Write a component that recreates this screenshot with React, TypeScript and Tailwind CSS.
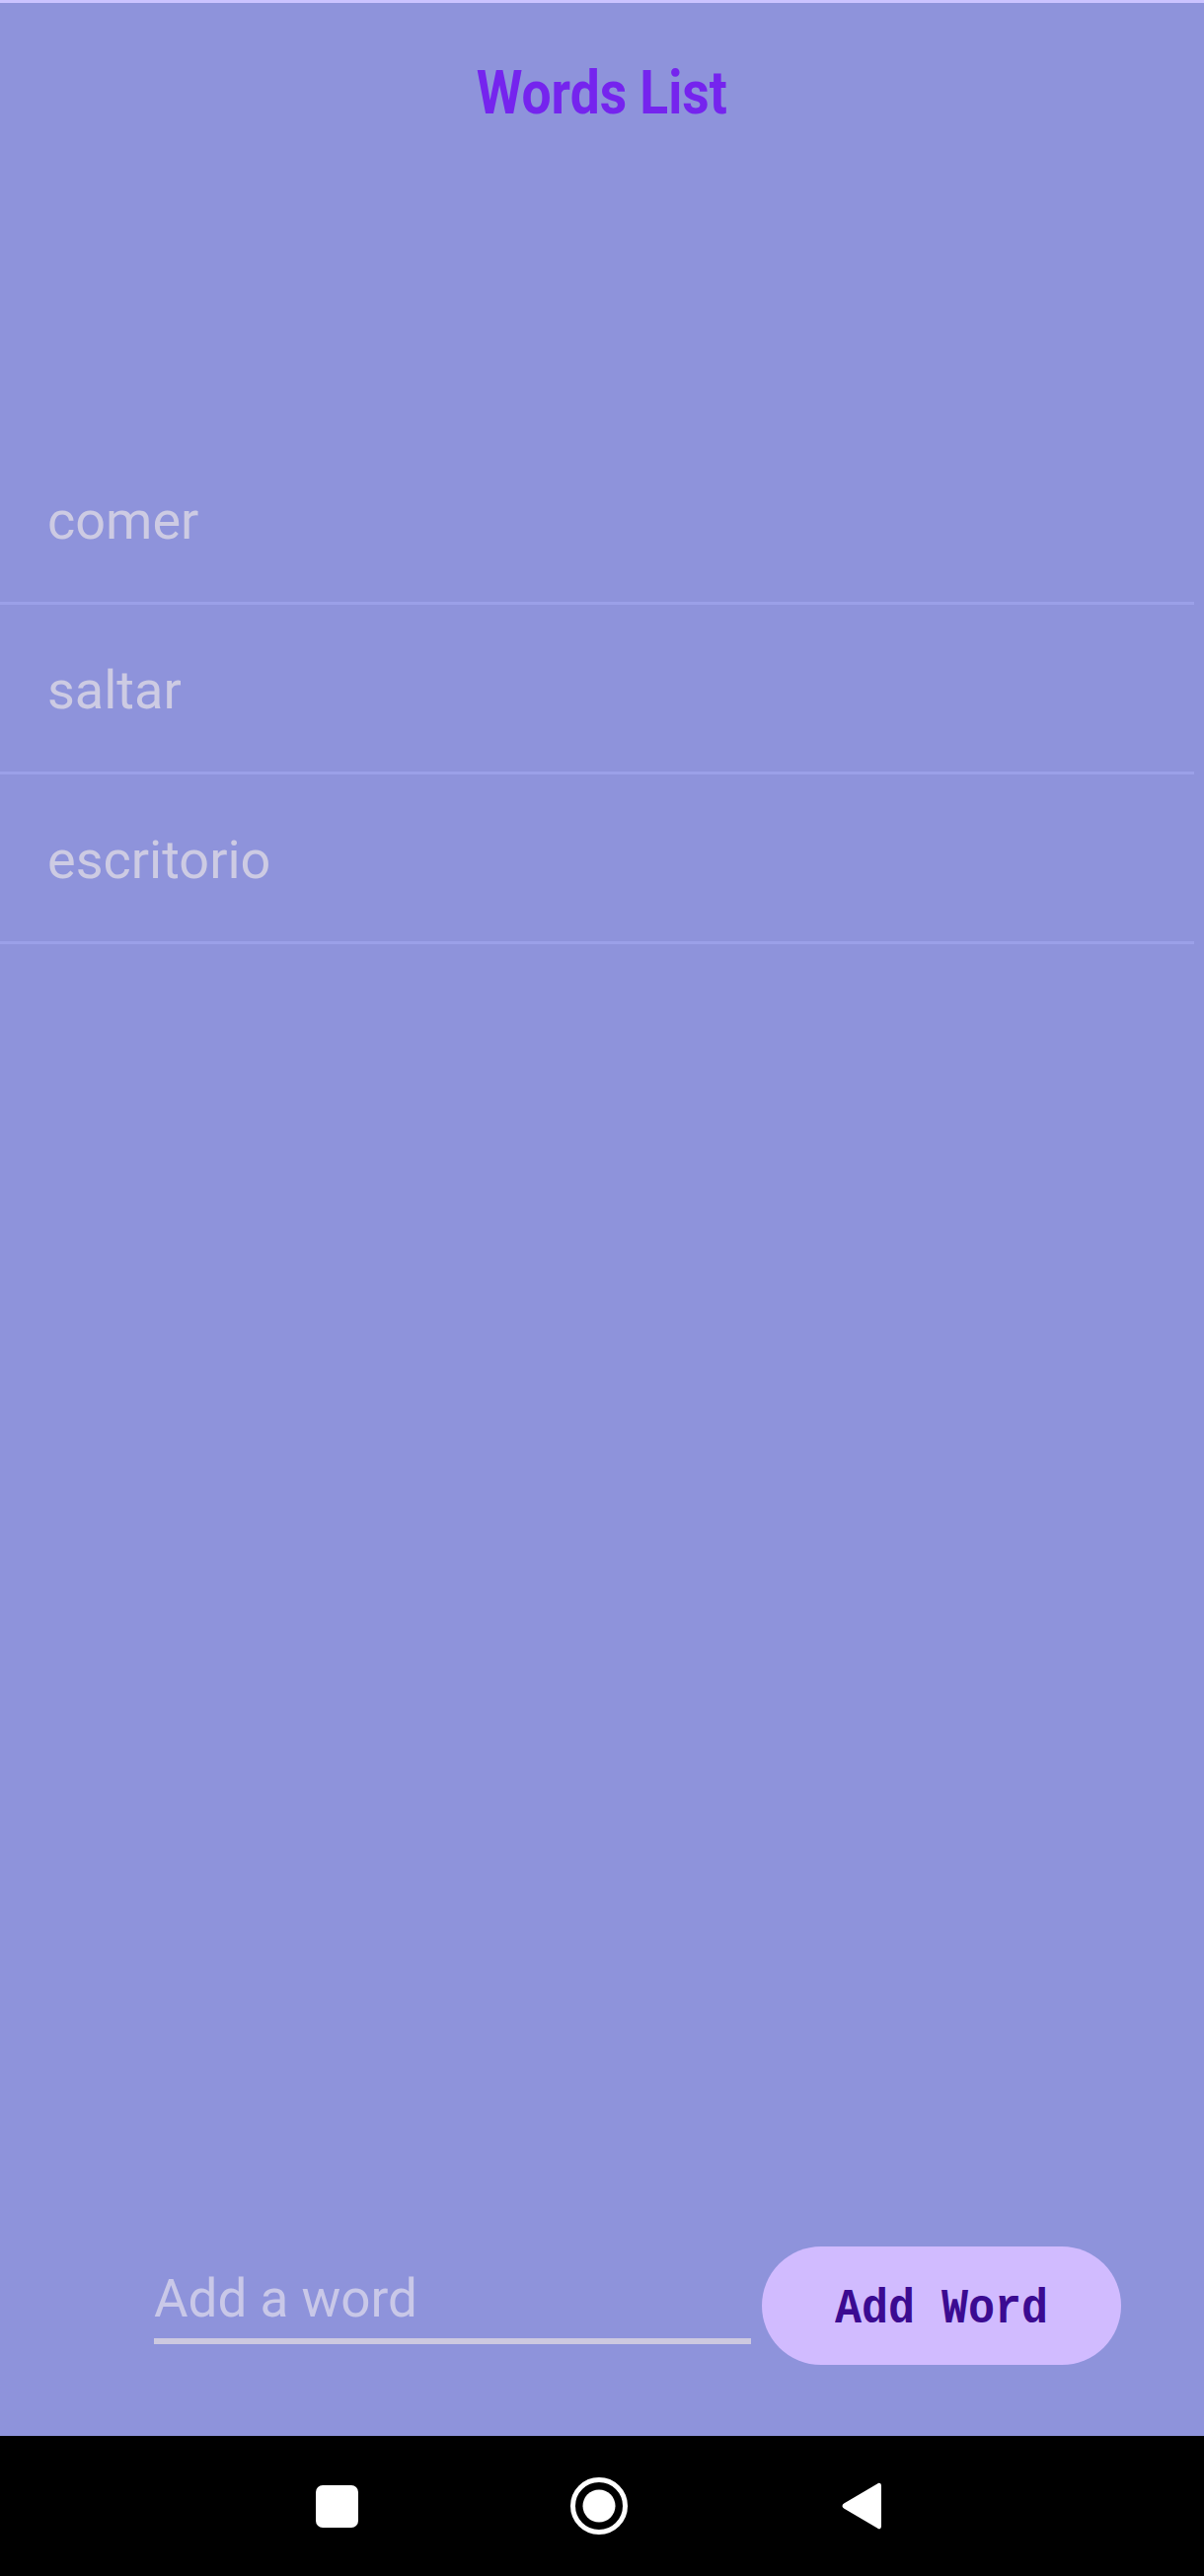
import { useState } from "react"

const initialWords = ["comer", "saltar", "escritorio"]

function NavBar() {
  return (
    <nav className="flex h-[142px] items-center justify-center bg-black pr-[6px]">
      {/* recents */}
      <div className="flex w-[266px] justify-center">
        <div className="h-[43px] w-[43px] rounded-[7px] bg-white" />
      </div>
      {/* home */}
      <div className="flex w-[266px] justify-center">
        <svg width="60" height="60" viewBox="0 0 60 60">
          <circle cx="30" cy="30" r="26.5" fill="none" stroke="white" strokeWidth="5" />
          <circle cx="30" cy="30" r="16.5" fill="white" />
        </svg>
      </div>
      {/* back */}
      <div className="flex w-[266px] justify-center">
        <svg width="42" height="50" viewBox="0 0 42 50">
          <path
            d="M38 3 Q40 2 40 5 L40 45 Q40 48 38 47 L4 27 Q1 25 4 23 Z"
            fill="white"
            stroke="white"
            strokeWidth="2"
            strokeLinejoin="round"
          />
        </svg>
      </div>
    </nav>
  )
}

export default function App() {
  const [words, setWords] = useState(initialWords)
  const [text, setText] = useState("")

  const addWord = (e: React.FormEvent) => {
    e.preventDefault()
    if (!text.trim()) return
    setWords([...words, text.trim()])
    setText("")
  }

  return (
    <div className="flex h-[2611px] w-full flex-col bg-[#8e93db] font-['Roboto',sans-serif]">
      <div className="h-[3px] bg-[#cbc3ff]" />

      {/* Header */}
      <header className="flex justify-center pt-[55px]">
        <h1 className="origin-center scale-x-[0.86] text-[62px] font-bold leading-[72px] text-[#7524ee]">
          Words List
        </h1>
      </header>

      {/* Words */}
      <ul className="mt-[311px]">
        {words.map((w) => (
          <li
            key={w}
            className="mr-[10px] flex h-[172px] items-center border-b-[3px] border-[#9ba0e8] pl-[48px] pt-[4px] text-[54px] text-[#cdcbe3]"
          >
            {w}
          </li>
        ))}
      </ul>

      <div className="flex-1" />

      {/* Add word */}
      <form onSubmit={addWord} className="flex items-end pb-[72px] pl-[156px]">
        <div className="mb-[21px] w-[605px] border-b-[6px] border-[#cdc9e0] pb-[9px]">
          <input
            value={text}
            onChange={(e) => setText(e.target.value)}
            placeholder="Add a word"
            className="block h-[62px] w-full bg-transparent text-[53px] leading-[62px] text-[#e8e6f5] outline-none placeholder:text-[#c9c8e8]"
          />
        </div>
        <button
          type="submit"
          className="ml-[11px] flex h-[120px] w-[364px] items-center justify-center rounded-full bg-[#d1bbff] pt-[6px] font-['Liberation_Mono',monospace] text-[50px] font-bold text-[#3b0b91]"
        >
          <span className="inline-block scale-x-[0.9] whitespace-pre">Add Word</span>
        </button>
      </form>

      <NavBar />
    </div>
  )
}
